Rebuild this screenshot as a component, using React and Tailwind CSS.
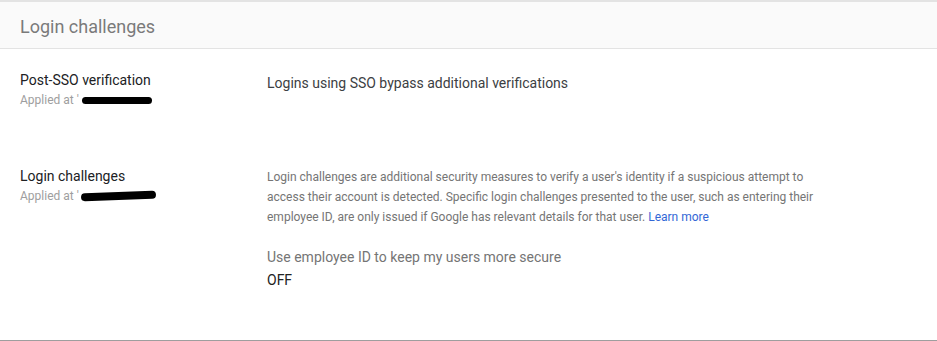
function Redacted({ className }) {
  return <span className={`inline-block bg-black rounded-full align-middle ${className}`} />;
}

function SettingRow({ title, children, className, rightClassName, redactClassName }) {
  return (
    <div className={`grid grid-cols-[267px_1fr] ${className}`}>
      <div className="pl-5">
        <div className="text-[14px] leading-5 text-[#202124]">{title}</div>
        <div className="flex items-center text-[12px] leading-5 text-[#9e9e9e]">
          <span>Applied at '</span>
          <Redacted className={redactClassName} />
        </div>
      </div>
      <div className={rightClassName}>{children}</div>
    </div>
  );
}

export default function App() {
  return (
    <div
      className="w-[937px] h-[341px] bg-white flex flex-col border-b border-[#9e9e9e]"
      style={{ fontFamily: "Roboto, 'Liberation Sans', sans-serif" }}
    >
      <div className="h-[49px] bg-[#fafafa] border-t-2 border-b border-[#e3e3e3] flex items-center px-5 pt-[3px]">
        <h1 className="text-[18px] text-[#7a7a7a] font-normal">Login challenges</h1>
      </div>

      <SettingRow
        title="Post-SSO verification"
        className="pt-[21px] pb-[55px]"
        rightClassName="pt-[3px]"
        redactClassName="w-[70px] h-[7px] ml-[3px] mt-[1px]"
      >
        <p className="text-[14px] leading-5 text-[#3c4043]">
          Logins using SSO bypass additional verifications
        </p>
      </SettingRow>

      <SettingRow
        title="Login challenges"
        className="pt-[1px]"
        rightClassName="pt-[1px]"
        redactClassName="w-[75px] h-[8px] ml-[2px] -rotate-2"
      >
        <p className="text-[12px] leading-5 text-[#757575] max-w-[560px]">
          Login challenges are additional security measures to verify a user's identity if a
          suspicious attempt to access their account is detected. Specific login challenges
          presented to the user, such as entering their employee ID, are only issued if Google
          has relevant details for that user.{" "}
          <a href="#" className="text-[#3367d6]">Learn more</a>
        </p>
        <p className="mt-5 text-[14px] leading-5 text-[#757575]">
          Use employee ID to keep my users more secure
        </p>
        <p className="mt-[3px] text-[14px] leading-5 text-[#212121]">OFF</p>
      </SettingRow>
    </div>
  );
}
